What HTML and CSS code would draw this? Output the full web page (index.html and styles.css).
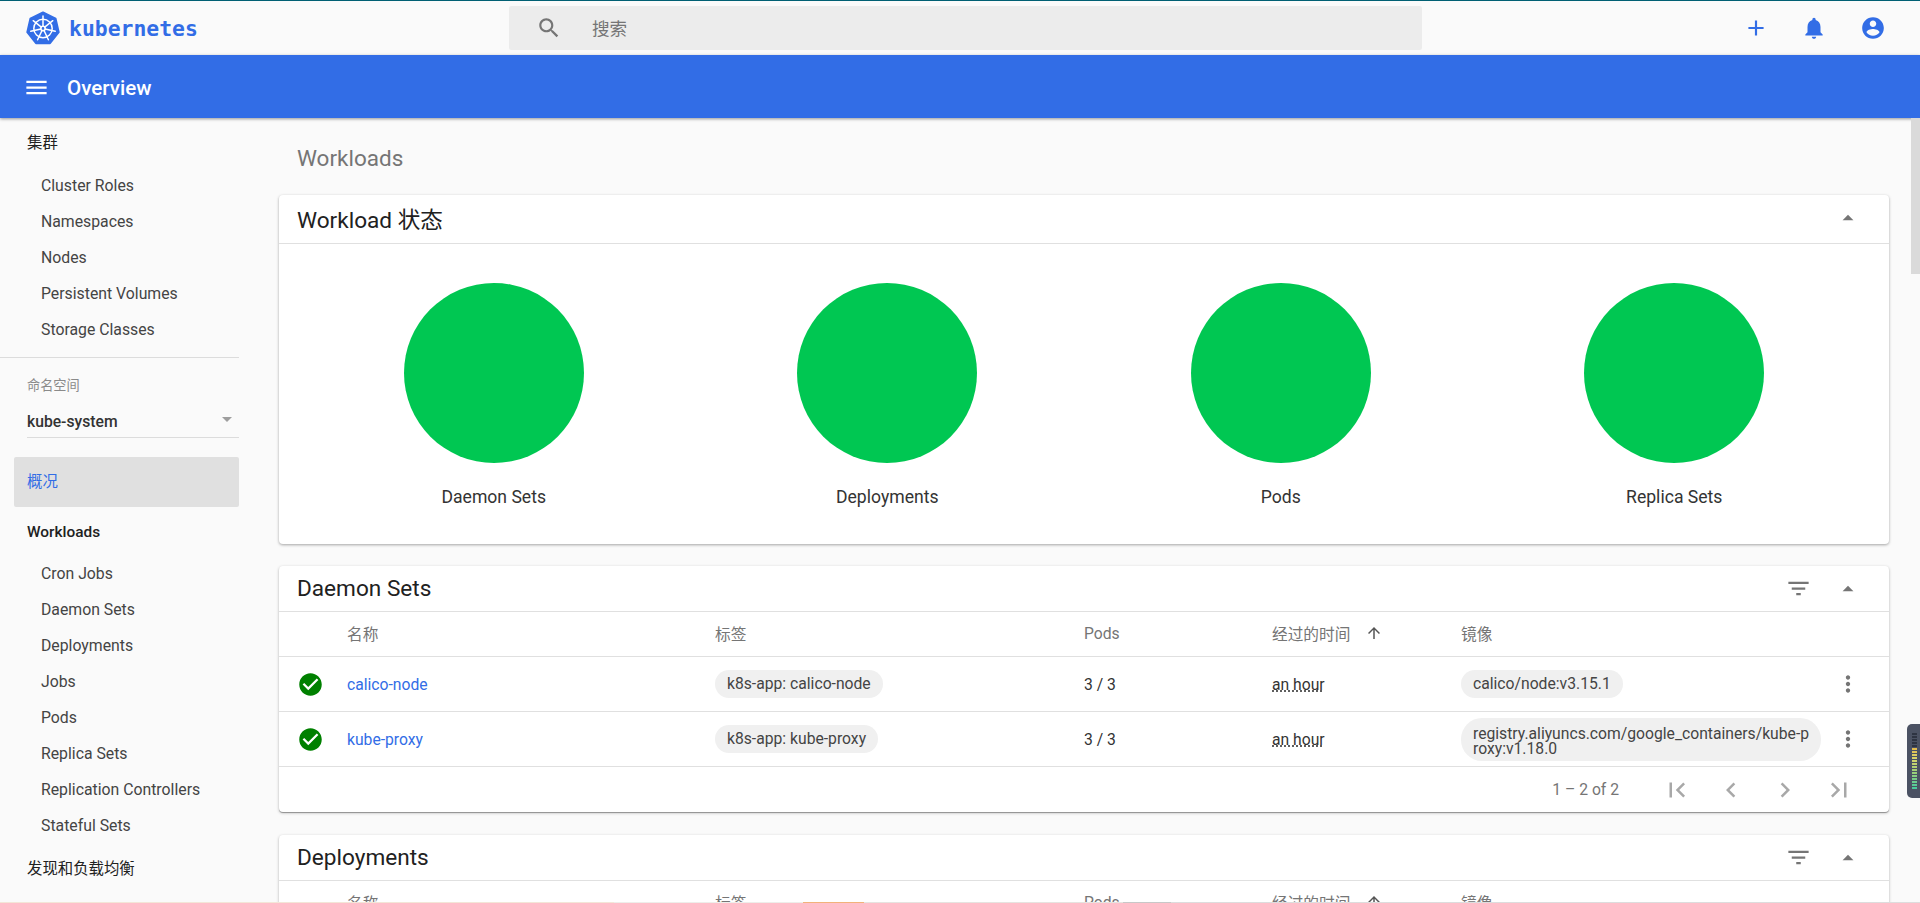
FILE: index.html
```html
<!DOCTYPE html>
<html lang="zh">
<head>
<meta charset="utf-8">
<title>Overview - Kubernetes Dashboard</title>
<link rel="stylesheet" href="styles.css">
</head>
<body>
<svg class="defs" aria-hidden="true">
  <symbol id="i-search" viewBox="0 0 24 24"><path d="M15.5 14h-.79l-.28-.27C15.41 12.59 16 11.11 16 9.5 16 5.91 13.09 3 9.5 3S3 5.91 3 9.5 5.91 16 9.5 16c1.61 0 3.09-.59 4.23-1.57l.27.28v.79l5 4.99L20.49 19l-4.99-5zm-6 0C7.01 14 5 11.99 5 9.5S7.01 5 9.5 5 14 7.01 14 9.5 11.99 14 9.5 14z"/></symbol>
  <symbol id="i-add" viewBox="0 0 24 24"><path d="M19 13h-6v6h-2v-6H5v-2h6V5h2v6h6v2z"/></symbol>
  <symbol id="i-bell" viewBox="0 0 24 24"><path d="M12 22c1.1 0 2-.9 2-2h-4c0 1.1.9 2 2 2zm6-6v-5c0-3.07-1.63-5.64-4.5-6.32V4c0-.83-.67-1.5-1.5-1.5s-1.5.67-1.5 1.5v.68C7.64 5.36 6 7.92 6 11v5l-2 2v1h16v-1l-2-2z"/></symbol>
  <symbol id="i-account" viewBox="0 0 24 24"><path d="M12 2C6.48 2 2 6.48 2 12s4.48 10 10 10 10-4.48 10-10S17.52 2 12 2zm0 3c1.66 0 3 1.34 3 3s-1.34 3-3 3-3-1.34-3-3 1.34-3 3-3zm0 14.2c-2.5 0-4.71-1.28-6-3.22.03-1.99 4-3.08 6-3.08 1.99 0 5.97 1.09 6 3.08-1.29 1.94-3.5 3.22-6 3.22z"/></symbol>
  <symbol id="i-menu" viewBox="0 0 24 24"><path d="M3 18h18v-2H3v2zm0-5h18v-2H3v2zm0-7v2h18V6H3z"/></symbol>
  <symbol id="i-up" viewBox="0 0 24 24"><path d="M7 14l5-5 5 5z"/></symbol>
  <symbol id="i-filter" viewBox="0 0 24 24"><path d="M10 18h4v-2h-4v2zM3 6v2h18V6H3zm3 7h12v-2H6v2z"/></symbol>
  <symbol id="i-check" viewBox="0 0 24 24"><path d="M12 2C6.48 2 2 6.48 2 12s4.48 10 10 10 10-4.48 10-10S17.52 2 12 2zm-2 15l-5-5 1.41-1.41L10 14.17l7.59-7.59L19 8l-9 9z"/></symbol>
  <symbol id="i-more" viewBox="0 0 24 24"><path d="M12 8c1.1 0 2-.9 2-2s-.9-2-2-2-2 .9-2 2 .9 2 2 2zm0 2c-1.1 0-2 .9-2 2s.9 2 2 2 2-.9 2-2-.9-2-2-2zm0 6c-1.1 0-2 .9-2 2s.9 2 2 2 2-.9 2-2-.9-2-2-2z"/></symbol>
  <symbol id="i-arrow" viewBox="0 0 24 24"><path d="M4 12l1.41 1.41L11 7.83V20h2V7.83l5.58 5.59L20 12l-8-8-8 8z"/></symbol>
  <symbol id="i-first" viewBox="0 0 24 24"><path d="M18.41 16.59L13.82 12l4.59-4.59L17 6l-6 6 6 6zM6 6h2v12H6z"/></symbol>
  <symbol id="i-prev" viewBox="0 0 24 24"><path d="M15.41 7.41L14 6l-6 6 6 6 1.41-1.41L10.83 12z"/></symbol>
  <symbol id="i-next" viewBox="0 0 24 24"><path d="M10 6L8.59 7.41 13.17 12l-4.58 4.59L10 18l6-6z"/></symbol>
  <symbol id="i-last" viewBox="0 0 24 24"><path d="M5.59 7.41L10.18 12l-4.59 4.59L7 18l6-6-6-6zM16 6h2v12h-2z"/></symbol>
</svg>

<header class="topbar">
  <div class="brand">
    <svg class="logo" viewBox="0 0 34 34">
      <path class="logo-hept" d="M17 1.5 29.6 7.6 32.7 21.2 24 32.2H10L1.3 21.2 4.4 7.6Z"/>
      <g class="logo-wheel">
        <circle cx="17" cy="17.5" r="9.2"/>
        <circle cx="17" cy="17.5" r="2.2"/>
        <path d="M17 5v10.3M26.8 9.7 18.7 16.1M29.2 20.3 19.1 18M22.4 28.8 18 19.5M11.6 28.8 16 19.5M4.8 20.3 14.9 18M7.2 9.7 15.3 16.1"/>
      </g>
    </svg>
    <span class="brand-name">kubernetes</span>
  </div>
  <div class="search">
    <svg class="search-icon"><use href="#i-search"/></svg>
    <span class="search-text">搜索</span>
  </div>
  <div class="top-actions">
    <svg class="top-icon"><use href="#i-add"/></svg>
    <svg class="top-icon"><use href="#i-bell"/></svg>
    <svg class="top-icon"><use href="#i-account"/></svg>
  </div>
</header>

<div class="titlebar">
  <svg class="menu-icon"><use href="#i-menu"/></svg>
  <span class="page-title">Overview</span>
</div>

<div class="layout">
  <nav class="sidebar">
    <div class="nav-title">集群</div>
    <div class="nav-group">
      <div class="nav-item">Cluster Roles</div>
      <div class="nav-item">Namespaces</div>
      <div class="nav-item">Nodes</div>
      <div class="nav-item">Persistent Volumes</div>
      <div class="nav-item">Storage Classes</div>
    </div>
    <hr class="nav-divider">
    <div class="ns">
      <div class="ns-label">命名空间</div>
      <div class="ns-select"><span>kube-system</span><i class="ns-caret"></i></div>
    </div>
    <div class="nav-selected">概况</div>
    <div class="nav-title nav-strong">Workloads</div>
    <div class="nav-group nav-group-tight">
      <div class="nav-item">Cron Jobs</div>
      <div class="nav-item">Daemon Sets</div>
      <div class="nav-item">Deployments</div>
      <div class="nav-item">Jobs</div>
      <div class="nav-item">Pods</div>
      <div class="nav-item">Replica Sets</div>
      <div class="nav-item">Replication Controllers</div>
      <div class="nav-item">Stateful Sets</div>
    </div>
    <div class="nav-title nav-last">发现和负载均衡</div>
  </nav>

  <main class="main">
    <div class="section-title">Workloads</div>

    <section class="card">
      <div class="card-head card-head-tall">
        <h2 class="card-title">Workload 状态</h2>
        <svg class="head-icon"><use href="#i-up"/></svg>
      </div>
      <div class="charts">
        <div class="chart"><div class="disc"></div><div class="chart-label">Daemon Sets</div></div>
        <div class="chart"><div class="disc"></div><div class="chart-label">Deployments</div></div>
        <div class="chart"><div class="disc"></div><div class="chart-label">Pods</div></div>
        <div class="chart"><div class="disc"></div><div class="chart-label">Replica Sets</div></div>
      </div>
    </section>

    <section class="card card-table">
      <div class="card-head">
        <h2 class="card-title">Daemon Sets</h2>
        <svg class="head-icon filter-icon"><use href="#i-filter"/></svg>
        <svg class="head-icon"><use href="#i-up"/></svg>
      </div>
      <div class="row row-head">
        <span></span><span>名称</span><span>标签</span><span>Pods</span>
        <span class="sorted">经过的时间<svg class="sort-icon"><use href="#i-arrow"/></svg></span>
        <span>镜像</span><span></span>
      </div>
      <div class="row">
        <svg class="status"><use href="#i-check"/></svg>
        <a class="link">calico-node</a>
        <span><span class="chip">k8s-app: calico-node</span></span>
        <span>3 / 3</span>
        <span class="age">an hour</span>
        <span><span class="chip">calico/node:v3.15.1</span></span>
        <svg class="more"><use href="#i-more"/></svg>
      </div>
      <div class="row">
        <svg class="status"><use href="#i-check"/></svg>
        <a class="link">kube-proxy</a>
        <span><span class="chip">k8s-app: kube-proxy</span></span>
        <span>3 / 3</span>
        <span class="age">an hour</span>
        <span><span class="chip chip-multi">registry.aliyuncs.com/google_containers/kube-p<br>roxy:v1.18.0</span></span>
        <svg class="more"><use href="#i-more"/></svg>
      </div>
      <div class="pager">
        <span class="pager-range">1 – 2 of 2</span>
        <svg class="pager-icon"><use href="#i-first"/></svg>
        <svg class="pager-icon"><use href="#i-prev"/></svg>
        <svg class="pager-icon"><use href="#i-next"/></svg>
        <svg class="pager-icon"><use href="#i-last"/></svg>
      </div>
    </section>

    <section class="card card-table">
      <div class="card-head">
        <h2 class="card-title">Deployments</h2>
        <svg class="head-icon filter-icon"><use href="#i-filter"/></svg>
        <svg class="head-icon"><use href="#i-up"/></svg>
      </div>
      <div class="row row-head">
        <span></span><span>名称</span><span>标签</span><span>Pods</span>
        <span class="sorted">经过的时间<svg class="sort-icon"><use href="#i-arrow"/></svg></span>
        <span>镜像</span><span></span>
      </div>
    </section>
  </main>
</div>

<div class="scroll-thumb"></div>
<div class="meter"><div class="meter-bars"></div></div>
<div class="taskbar-edge"></div>
</body>
</html>
```

FILE: styles.css
```css
* { box-sizing: border-box; }

html, body {
  margin: 0;
  height: 903px;
  overflow: hidden;
}

body {
  position: relative;
  display: flex;
  flex-direction: column;
  background: #fafafa;
  color: #333;
  font-family: Roboto, "Noto Sans CJK SC", sans-serif;
  font-size: 15.7px;
}

.defs { display: none; }

/* Top bar */
.topbar {
  flex: none;
  display: flex;
  align-items: center;
  height: 55px;
  border-top: 1px solid #005f73;
  background: #fafafa;
}

.brand {
  display: flex;
  align-items: center;
  width: 509px;
  padding-left: 26px;
  gap: 9px;
}

.logo { width: 34px; height: 34px; }

.logo-hept {
  fill: #326de6;
  stroke: #326de6;
  stroke-width: 2;
  stroke-linejoin: round;
}

.logo-wheel {
  fill: none;
  stroke: #fff;
  stroke-width: 1.5;
  stroke-linecap: round;
}

.brand-name {
  color: #326de6;
  font-family: "DejaVu Sans Mono", monospace;
  font-size: 21.4px;
  font-weight: 700;
}

.search {
  display: flex;
  align-items: center;
  width: 913px;
  height: 44px;
  padding-left: 27px;
  border-radius: 2px;
  background: #ececec;
}

.search-icon {
  width: 26px;
  height: 26px;
  fill: #757575;
}

.search-text {
  margin: -2px 0 0 30px;
  color: #757575;
  font-size: 17.6px;
}

.top-actions {
  display: flex;
  gap: 32px;
  margin-left: 321px;
}

.top-icon {
  width: 26px;
  height: 26px;
  fill: #326de6;
}

.top-icon:last-child { margin-left: 1px; }

/* Title bar */
.titlebar {
  flex: none;
  position: relative;
  z-index: 2;
  display: flex;
  align-items: center;
  height: 63px;
  padding: 2px 0 0 23px;
  background: #326de6;
  box-shadow: 0 1px 3px rgba(0, 0, 0, .4);
  color: #fff;
}

.menu-icon {
  width: 27px;
  height: 27px;
  fill: #fff;
}

.page-title {
  margin: 1px 0 0 17px;
  font-size: 20.6px;
  font-weight: 500;
}

/* Layout */
.layout {
  flex: 1;
  display: flex;
  min-height: 0;
}

/* Sidebar */
.sidebar {
  flex: none;
  width: 261px;
  padding: 7px 22px 0 0;
  overflow: hidden;
}

.nav-title {
  height: 36px;
  padding-left: 27px;
  color: #212121;
  font-size: 15.4px;
  line-height: 36px;
}

.nav-strong { font-weight: 500; }
.nav-last { margin-top: 7px; }

.nav-group { margin-top: 7px; }
.nav-group-tight { margin-top: 6px; }

.nav-item {
  height: 36px;
  padding-left: 41px;
  color: #444;
  font-size: 15.8px;
  line-height: 36px;
  white-space: nowrap;
}

.nav-divider {
  height: 1px;
  margin: 9px 0 0;
  border: 0;
  background: #dcdcdc;
}

.ns { padding: 18px 0 0 27px; }

.ns-label {
  height: 20px;
  color: #8a8a8a;
  font-size: 13.2px;
  line-height: 20px;
}

.ns-select {
  display: flex;
  align-items: center;
  justify-content: space-between;
  height: 42px;
  padding: 10px 7px 0 0;
  border-bottom: 1px solid #dcdcdc;
  color: #333;
  font-weight: 500;
}

.ns-caret {
  width: 0;
  height: 0;
  margin-bottom: 4px;
  border-left: 5px solid transparent;
  border-right: 5px solid transparent;
  border-top: 5px solid #9e9e9e;
}

.nav-selected {
  height: 50px;
  margin: 19px 0 7px 14px;
  padding-left: 13px;
  border-radius: 2px;
  background: #e0e0e0;
  color: #326de6;
  font-size: 15.4px;
  line-height: 50px;
}

/* Main */
.main {
  flex: 1;
  min-width: 0;
  padding: 22px 31px 0 18px;
  overflow: hidden;
}

.section-title {
  height: 36px;
  margin-bottom: 19px;
  padding-left: 18px;
  color: #757575;
  font-size: 22.5px;
  line-height: 36px;
}

.card {
  margin-bottom: 22px;
  border-radius: 4px;
  background: #fff;
  box-shadow: 0 1px 3px rgba(0, 0, 0, .35);
}

.card-table {
  margin-bottom: 23px;
  box-shadow: 0 1px 3px rgba(0, 0, 0, .3), 0 1px 0 rgba(0, 0, 0, .25);
}

.card-head {
  display: flex;
  align-items: center;
  height: 46px;
  padding: 0 28px 0 18px;
  border-bottom: 1px solid #e0e0e0;
}

.card-head-tall {
  height: 49px;
  padding-bottom: 2px;
}

.card-title {
  flex: 1;
  margin: 0;
  color: #212121;
  font-size: 22.6px;
  font-weight: 400;
}

.head-icon {
  width: 26px;
  height: 26px;
  fill: #757575;
}

.filter-icon {
  width: 27px;
  height: 27px;
  margin-right: 23px;
}

.charts {
  display: grid;
  grid-template-columns: repeat(4, 1fr);
  height: 300px;
  padding: 39px 18px 0;
}

.chart {
  display: flex;
  flex-direction: column;
  align-items: center;
}

.disc {
  width: 180px;
  height: 180px;
  border-radius: 50%;
  background: #00c752;
}

.chart-label {
  margin-top: 23px;
  color: #333;
  font-size: 17.6px;
  line-height: 22px;
}

/* Table */
.row {
  display: grid;
  grid-template-columns: 68px 368px 369px 188px 189px 1fr 46px;
  align-items: center;
  height: 55px;
  padding-right: 18px;
  border-bottom: 1px solid #e0e0e0;
}

.row-head {
  height: 45px;
  padding-bottom: 2px;
  color: #757575;
}

.sorted {
  display: flex;
  align-items: center;
}

.sort-icon {
  width: 18px;
  height: 18px;
  margin-left: 15px;
  fill: #555;
}

.status {
  justify-self: center;
  width: 27px;
  height: 27px;
  margin-left: -5px;
  fill: #008000;
}

.link { color: #326de6; }

.age {
  color: #333;
  text-decoration: underline dotted;
}

.chip {
  display: inline-block;
  padding: 0 12px;
  border-radius: 14px;
  background: #f0f0f0;
  color: #444;
  font-size: 15.7px;
  line-height: 28px;
  white-space: nowrap;
}

.chip-multi {
  width: 360px;
  padding: 8px 12px 5px;
  border-radius: 21px;
  line-height: 15px;
}

.more {
  justify-self: center;
  width: 26px;
  height: 26px;
  fill: #757575;
}

.pager {
  display: flex;
  align-items: center;
  justify-content: flex-end;
  gap: 24px;
  height: 45px;
  padding-right: 35px;
  color: #757575;
}

.pager-range {
  margin-right: 19px;
  white-space: nowrap;
}

.pager-icon {
  flex: none;
  width: 30px;
  height: 30px;
  fill: #a8a8a8;
}

/* Overlays */
.scroll-thumb {
  position: absolute;
  top: 118px;
  right: 0;
  z-index: 3;
  width: 9px;
  height: 156px;
  background: #dadada;
}

.meter {
  position: absolute;
  top: 724px;
  right: 0;
  z-index: 3;
  width: 13px;
  height: 74px;
  padding: 9px 3px 0 5px;
  border-radius: 5px 0 0 5px;
  background: #4b5263;
}

.meter-bars {
  height: 57px;
  background:
    repeating-linear-gradient(to bottom, transparent 0 2px, #4b5263 2px 3px),
    linear-gradient(to bottom, #2e3442 0 25%, #e6b84a 25%, #d9d66a 45%, #98cf7a 70%, #3fcaa0 100%);
}

.taskbar-edge {
  position: absolute;
  left: 0;
  right: 0;
  bottom: 0;
  z-index: 4;
  height: 1px;
  background: linear-gradient(to right,
    #f3e6d8 0 32%, #eeeeea 32% 41.8%, #f2b27a 41.8% 45%, #e6e4e0 45% 58.5%, #c8c8c8 58.5% 61%, #dddddd 61% 100%);
}
```
